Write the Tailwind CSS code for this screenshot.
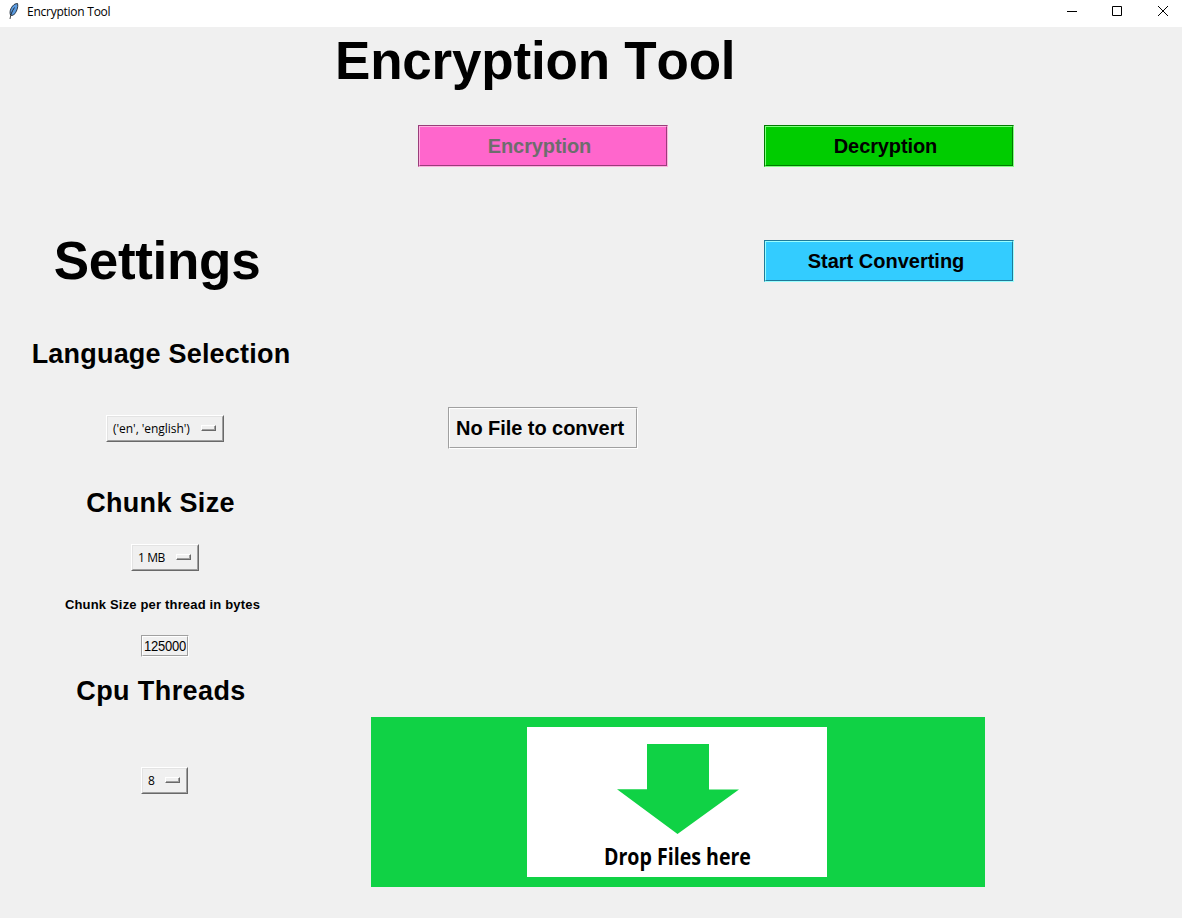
<!DOCTYPE html>
<html lang="en">
<head>
<meta charset="utf-8">
<title>Encryption Tool</title>
<script src="https://cdn.jsdelivr.net/npm/@tailwindcss/browser@4"></script>
</head>
<body class="w-[1182px] h-[918px] overflow-hidden flex flex-col bg-[#f0f0f0] text-black font-['Liberation_Sans',sans-serif] [font-kerning:none]">
  <header class="h-[27px] shrink-0 bg-white flex items-start">
    <svg class="ml-[8px] mt-[3px] w-[12px] h-[17px]" viewBox="0 0 12 17">
      <path d="M2.500 12 C1 8 3.500 3 7 1 L9.500 .5 C10.500 4 8.500 9.500 5.500 12 L3.500 12.500Z" fill="#5b9be0" stroke="#1c2733" stroke-width=".9"/>
      <path d="M2 16 C2.500 12 4 8 6.500 4.500" fill="none" stroke="#111" stroke-width=".8"/>
    </svg>
    <h1 class="ml-[7px] mt-[3px] text-[12px] leading-[18px] tracking-[-0.25px] whitespace-nowrap font-['Open_Sans',sans-serif]">Encryption Tool</h1>
    <svg class="ml-auto w-[120px] h-[27px]" viewBox="0 0 120 27" fill="none" stroke="#000" stroke-width="1">
      <path d="M5 11.500H15M50.500 6.500H59.500V15.500H50.500Z"/>
      <path d="M96 6L106 16M106 6L96 16"/>
    </svg>
  </header>
  <main class="flex grow">
    <section class="w-[330px] shrink-0 flex flex-col items-center whitespace-nowrap">
      <h2 class="mt-[204px] mr-[16px] h-[60px] leading-[60px] text-[53px] font-bold tracking-[-0.3px]">Settings</h2>
      <h3 class="mt-[47px] mr-[8px] h-[32px] leading-[32px] text-[27px] font-bold tracking-[0.2px]">Language Selection</h3>
      <div class="mt-[45px] w-[118px] h-[27px] border border-white border-r-[#696969] border-b-[#696969]">
        <div class="h-full border border-[#e3e3e3] border-r-[#a0a0a0] border-b-[#a0a0a0] flex items-center justify-between pl-[5px] pr-[6px] font-['Open_Sans',sans-serif] text-[12px]">
          <span class="tracking-[-0.05px]">('en', 'english')</span>
          <i class="mb-px w-[15px] h-[6px] border border-white border-r-[#696969] border-b-[#696969] shadow-[inset_-1px_-1px_#a0a0a0]"></i>
        </div>
      </div>
      <h3 class="mt-[45px] mr-[9px] h-[32px] leading-[32px] text-[27px] font-bold tracking-[0.3px]">Chunk Size</h3>
      <div class="mt-[25px] w-[68px] h-[27px] border border-white border-r-[#696969] border-b-[#696969]">
        <div class="h-full border border-[#e3e3e3] border-r-[#a0a0a0] border-b-[#a0a0a0] flex items-center justify-between pl-[5px] pr-[6px] font-['Open_Sans',sans-serif] text-[12px]">
          <span class="tracking-[-0.4px]">1 MB</span>
          <i class="mb-px w-[15px] h-[6px] border border-white border-r-[#696969] border-b-[#696969] shadow-[inset_-1px_-1px_#a0a0a0]"></i>
        </div>
      </div>
      <h4 class="mt-[24px] mr-[5px] h-[20px] leading-[20px] text-[13px] font-bold tracking-[0.17px]">Chunk Size per thread in bytes</h4>
      <div class="mt-[20px] w-[48px] h-[22px] border border-[#a0a0a0] border-r-white border-b-white">
        <div class="h-full border border-white border-r-[#a0a0a0] border-b-[#a0a0a0] flex items-center pl-[1px] pt-[2px] text-[13px] tracking-[-0.25px]"><span class="scale-y-[1.08]">125000</span></div>
      </div>
      <h3 class="mt-[18px] mr-[8px] h-[32px] leading-[32px] text-[27px] font-bold tracking-[0.4px]">Cpu Threads</h3>
      <div class="mt-[60px] mr-px w-[47px] h-[27px] border border-white border-r-[#696969] border-b-[#696969]">
        <div class="h-full border border-[#e3e3e3] border-r-[#a0a0a0] border-b-[#a0a0a0] flex items-center justify-between pl-[5px] pr-[6px] font-['Open_Sans',sans-serif] text-[12px]">
          <span>8</span>
          <i class="mb-px w-[15px] h-[6px] border border-white border-r-[#696969] border-b-[#696969] shadow-[inset_-1px_-1px_#a0a0a0]"></i>
        </div>
      </div>
    </section>
    <section class="grow flex flex-col items-start whitespace-nowrap">
      <h2 class="mt-[4px] ml-[5px] h-[60px] leading-[60px] text-[53px] font-bold tracking-[-0.2px]">Encryption Tool</h2>
      <div class="mt-[34px] ml-[88px] flex gap-[96px] text-[20px] font-bold">
        <div class="w-[250px] h-[42px] border border-[#993d7a] border-r-[#ffb2e0] border-b-[#ffb2e0]">
          <div class="h-full border border-[#ffb2e0] border-r-[#993d7a] border-b-[#993d7a] bg-[#ff66cc] text-[#6d6d6d] flex items-center justify-center pr-[7px] tracking-[-0.1px]"><span>Encryption</span></div>
        </div>
        <div class="w-[250px] h-[42px] border border-[#007a00] border-r-[#80ff80] border-b-[#80ff80]">
          <div class="h-full border border-[#80ff80] border-r-[#007a00] border-b-[#007a00] bg-[#00cc00] flex items-center justify-center pr-[7px] tracking-[-0.1px]"><span>Decryption</span></div>
        </div>
      </div>
      <div class="mt-[73px] ml-[434px] w-[250px] h-[42px] border border-[#1f7a99] border-r-[#99ffff] border-b-[#99ffff] text-[20px] font-bold">
        <div class="h-full border border-[#99ffff] border-r-[#1f7a99] border-b-[#1f7a99] bg-[#33ccff] flex items-center justify-center pr-[6px]"><span>Start Converting</span></div>
      </div>
      <div class="mt-[125px] ml-[118px] w-[190px] h-[42px] border border-[#a0a0a0] border-r-white border-b-white text-[20px] font-bold">
        <div class="h-full border border-white border-r-[#a0a0a0] border-b-[#a0a0a0] flex items-center pl-[6px] tracking-[-0.05px]"><span>No File to convert</span></div>
      </div>
      <div class="mt-[268px] ml-[41px] w-[614px] h-[170px] bg-[#10d245] pl-[156px] pt-[10px]">
        <div class="w-[300px] h-[150px] bg-white flex flex-col items-center">
          <svg class="mt-[17px] ml-[2px] w-[122px] h-[90px] shrink-0" viewBox="0 0 122 90"><path d="M30 0H92V45.500H122L60.500 90L0 45.300H30Z" fill="#10d245"/></svg>
          <p class="mt-[7px] leading-[32px] text-[22.500px] font-bold font-['Open_Sans',sans-serif] origin-center scale-x-[0.87]">Drop Files here</p>
        </div>
      </div>
    </section>
  </main>
</body>
</html>
